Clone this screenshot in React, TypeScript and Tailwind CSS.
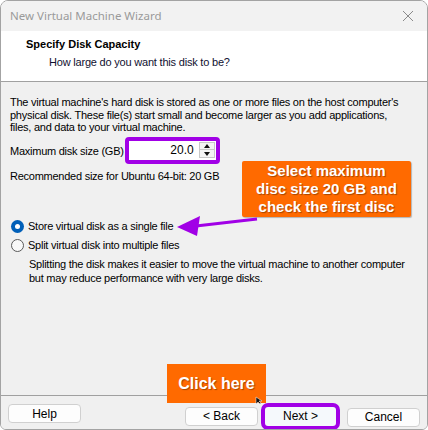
const body = "[font-family:'Liberation_Sans',Arial,sans-serif]";

function Radio({ checked }: { checked: boolean }) {
  return checked ? (
    <span className="w-[13px] h-[13px] rounded-full bg-[#005fb8] flex items-center justify-center shrink-0">
      <span className="w-[5px] h-[5px] rounded-full bg-white" />
    </span>
  ) : (
    <span className="w-[13px] h-[13px] rounded-full border border-[#5a5a5a] bg-[#f8f8f8] shrink-0" />
  );
}

function Btn({ label, next }: { label: string; next?: boolean }) {
  return (
    <button
      className={
        next
          ? "w-[71px] h-[19px] rounded-[3px] bg-[#f5f9fc] text-[12px] text-black leading-none outline-4 outline-[#a100e6] outline-offset-[0px]"
          : "w-[73px] h-[19px] rounded-[4px] border border-[#d0d0d0] bg-[#fdfdfd] text-[12px] text-black leading-none"
      }
    >
      {label}
    </button>
  );
}

export default function App() {
  return (
    <div className={`w-[428px] h-[430px] bg-white relative ${body}`}>
      <div className="h-full flex flex-col border border-[#a3a3a3] rounded-t-[8px] rounded-b-[6px] overflow-hidden">
        {/* title bar */}
        <div className="h-[30px] bg-[#f2f2f2] flex items-center justify-between pl-[9px] pr-[10px] shrink-0">
          <span className="text-[11.5px] text-[#9a9a9a] [font-family:'Noto_Sans',sans-serif]">
            New Virtual Machine Wizard
          </span>
          <svg width="12" height="12" viewBox="0 0 12 12" className="mr-[3px]">
            <path d="M1 1L11 11M11 1L1 11" stroke="#8a8a8a" strokeWidth="1" />
          </svg>
        </div>

        {/* header */}
        <div className="h-[51px] bg-white border-b border-[#a0a0a0] pt-[7px] shrink-0">
          <div className="pl-[25px] text-[11px] font-bold text-black leading-[13px]">Specify Disk Capacity</div>
          <div className="pl-[48px] mt-[5px] text-[11px] text-[#101030] leading-[13px] tracking-[-0.2px]">
            How large do you want this disk to be?
          </div>
        </div>

        {/* body */}
        <div className="flex-1 bg-[#f0f0f0] px-[9px] pt-[14px] text-[11px] text-black tracking-[-0.25px]">
          <p className="leading-[12.5px] whitespace-nowrap">
            The virtual machine's hard disk is stored as one or more files on the host computer's
            <br />
            physical disk. These file(s) start small and become larger as you add applications,
            <br />
            files, and data to your virtual machine.
          </p>

          <div className="flex items-center mt-[3px]">
            <span className="mt-[3px]">Maximum disk size (GB)</span>
            <div className="ml-[1px] flex items-center border-[4px] border-[#a100e6] rounded-[4px] p-[1px] bg-white">
              <div className="w-[68px] h-[17px] bg-white text-right pr-[4px] text-[12px] leading-[17px] tracking-normal">20.0</div>
              <div className="flex flex-col ml-[1px]">
                <div className="w-[16px] h-[8px] bg-[#f4f4f4] border border-[#c8c8c8] flex items-center justify-center">
                  <svg width="6" height="4" viewBox="0 0 6 4"><path d="M3 0L6 4H0Z" fill="#111" /></svg>
                </div>
                <div className="w-[16px] h-[8px] bg-[#f4f4f4] border border-[#c8c8c8] border-t-0 flex items-center justify-center">
                  <svg width="6" height="4" viewBox="0 0 6 4"><path d="M0 0H6L3 4Z" fill="#111" /></svg>
                </div>
              </div>
            </div>
          </div>

          <div className="mt-[6px] leading-[13px]">Recommended size for Ubuntu 64-bit: 20 GB</div>

          <div className="mt-[37px] flex flex-col gap-[6px] leading-[13px]">
            <label className="flex items-center gap-[4px] pl-[1px]">
              <Radio checked />
              <span>Store virtual disk as a single file</span>
            </label>
            <label className="flex items-center gap-[4px] pl-[1px]">
              <Radio checked={false} />
              <span>Split virtual disk into multiple files</span>
            </label>
          </div>

          <p className="pl-[19px] mt-[5px] leading-[14.5px] whitespace-nowrap">
            Splitting the disk makes it easier to move the virtual machine to another computer
            <br />
            but may reduce performance with very large disks.
          </p>
        </div>

        {/* footer */}
        <div className="h-[34px] bg-[#f0f0f0] border-t border-[#a0a0a0] flex items-start pt-[8px] px-[7px] shrink-0">
          <Btn label="Help" />
          <div className="ml-auto flex items-center gap-[7px]">
            <Btn label="< Back" />
            <Btn label="Next >" next />
            <div className="ml-[4px]">
              <Btn label="Cancel" />
            </div>
          </div>
        </div>
      </div>

      {/* annotation: callout */}
      <div className="absolute left-[242px] top-[161px] w-[169px] h-[56px] bg-[#ff6a00] rounded-[2px] flex items-center justify-center text-center text-white font-bold text-[15px] leading-[18px] [text-shadow:1px_1px_1px_rgba(0,0,0,0.35)] shadow-[1px_1px_1px_rgba(0,0,0,0.25)]">
        Select maximum
        <br />
        disc size 20 GB and
        <br />
        check the first disc
      </div>

      {/* annotation: arrow */}
      <svg className="absolute left-0 top-0 pointer-events-none" width="428" height="430">
        <line x1="257" y1="219" x2="196" y2="226" stroke="#a100e6" strokeWidth="3" />
        <path d="M177 227L200 216L197 236Z" fill="#a100e6" />
      </svg>

      {/* annotation: click here */}
      <div className="absolute left-[167px] top-[364px] w-[99px] h-[39px] bg-[#ff6a00] flex items-center justify-center text-white font-bold text-[16px] [text-shadow:1px_1px_1px_rgba(0,0,0,0.35)]">
        Click here
      </div>
      <svg className="absolute left-[255px] top-[396px]" width="8" height="9" viewBox="0 0 8 9">
        <path d="M1 1L1 8L3 6L5 8L6 7L4 5L7 5Z" fill="#111" stroke="#fff" strokeWidth="0.5" />
      </svg>
    </div>
  );
}
